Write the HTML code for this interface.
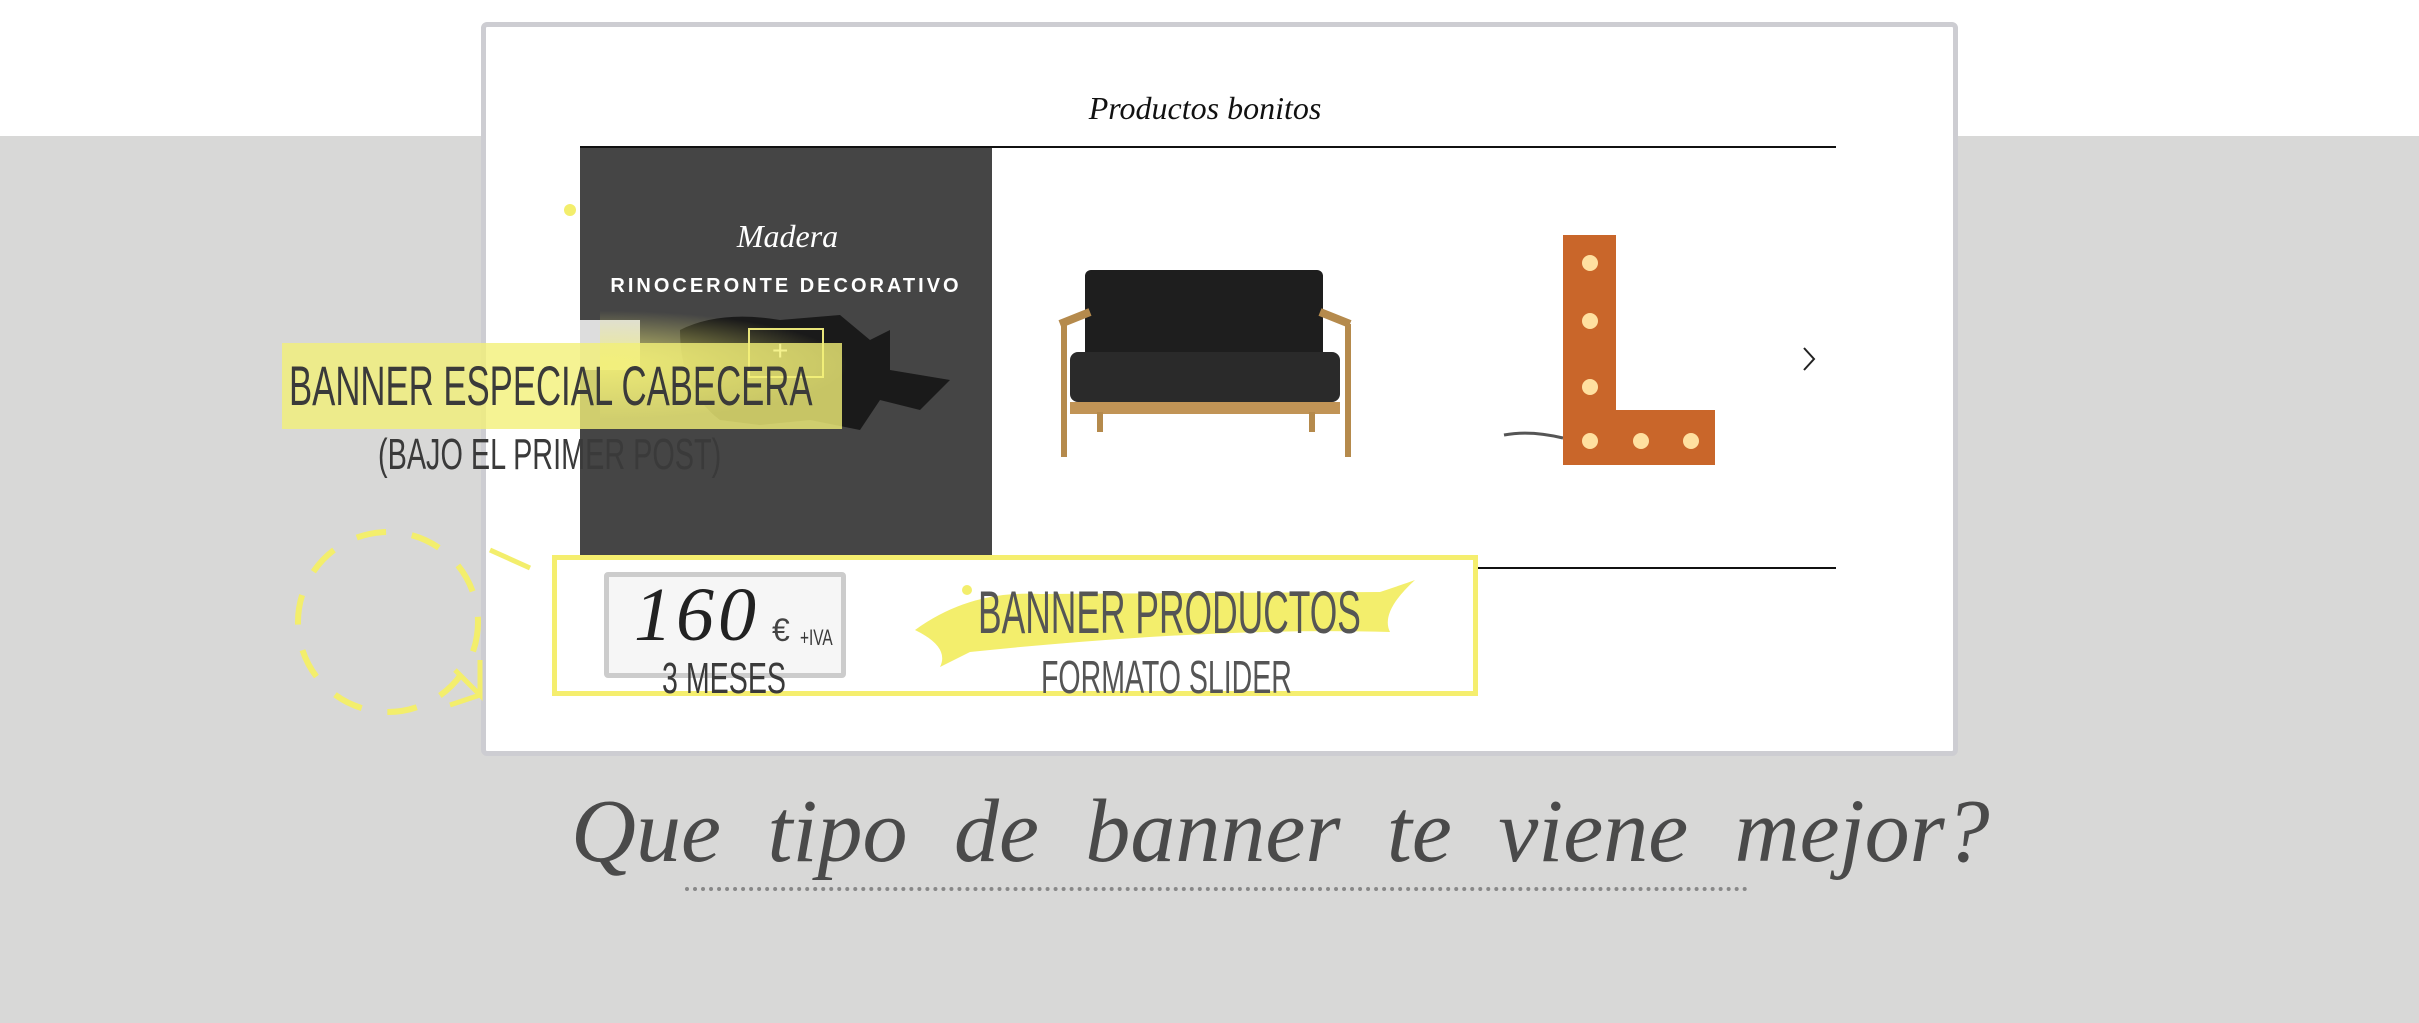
<!DOCTYPE html>
<html><head><meta charset="utf-8"><style>
*{margin:0;padding:0;box-sizing:border-box}
body{width:2419px;height:1023px;background:#d8d8d7;position:relative;overflow:hidden;font-family:"Liberation Sans",sans-serif}
.a{position:absolute}
.narrow{font-family:"Liberation Sans Narrow","Liberation Sans",sans-serif;display:inline-block;transform-origin:left top;white-space:nowrap;color:#3a3a3a}
.script{font-family:"Liberation Serif",serif;font-style:italic}
</style></head><body>
<div class="a" style="left:0;top:0;width:2419px;height:136px;background:#fff"></div>
<div class="a" style="left:481px;top:22px;width:1477px;height:734px;background:#fff;border:5px solid #cdcdd2;border-radius:6px"></div>
<div class="a script" style="left:1060px;top:90px;width:290px;text-align:center;font-size:32px;color:#111">Productos bonitos</div>
<div class="a" style="left:580px;top:146px;width:1256px;height:2px;background:#111"></div>
<div class="a" style="left:1478px;top:567px;width:358px;height:2px;background:#111"></div>
<div class="a" style="left:580px;top:148px;width:412px;height:407px;background:#454545"></div>
<div class="a script" style="left:700px;top:218px;width:175px;text-align:center;font-size:32px;color:#fff">Madera</div>
<div class="a" style="left:590px;top:275px;width:392px;text-align:center;font-size:20px;letter-spacing:3px;color:#fff;font-weight:bold">RINOCERONTE DECORATIVO</div>
<svg class="a" style="left:660px;top:300px" width="300" height="140"><path d="M20 30 Q60 10 120 20 L180 15 L210 40 L230 30 L230 70 L290 80 L260 110 L220 100 L200 130 L150 120 L100 125 L60 120 Q20 90 20 30Z" fill="#1a1a1a"/></svg>
<div class="a" style="left:580px;top:320px;width:60px;height:50px;background:#ddd"></div>
<div class="a" style="left:748px;top:328px;width:76px;height:50px;border:2px solid #e8e47a"></div>
<div class="a" style="left:772px;top:335px;color:#fff;font-size:28px">+</div>
<div class="a" style="left:282px;top:343px;width:560px;height:86px;background:rgba(243,240,120,.8)"></div>
<div class="a" style="left:600px;top:310px;width:250px;height:110px;background:radial-gradient(ellipse at left,rgba(243,240,120,.8),rgba(243,240,120,0) 70%)"></div>
<div class="a" style="left:289px;top:353px"><span class="narrow" style="font-size:56px;transform:scaleX(.62)">BANNER ESPECIAL CABECERA</span></div>
<div class="a" style="left:378px;top:430px"><span class="narrow" style="font-size:44px;transform:scaleX(.655)">(BAJO EL PRIMER POST)</span></div>
<div class="a" style="left:564px;top:204px;width:12px;height:12px;border-radius:50%;background:#f3ee6c"></div>
<svg class="a" style="left:1050px;top:262px" width="312" height="200">
<rect x="35" y="8" width="238" height="95" rx="6" fill="#1e1e1e"/>
<rect x="20" y="90" width="270" height="50" rx="8" fill="#2a2a2a"/>
<path d="M10 62 L40 50 M300 62 L270 50" stroke="#b58a4c" stroke-width="8"/>
<rect x="20" y="140" width="270" height="12" fill="#c19456"/>
<path d="M14 62 L14 195 M298 62 L298 195 M50 150 L50 170 M262 150 L262 170" stroke="#b58a4c" stroke-width="6"/>
</svg>
<svg class="a" style="left:1500px;top:230px" width="230" height="240">
<path d="M4 205 Q30 200 63 208" stroke="#555" stroke-width="3" fill="none"/>
<path d="M63 5 H116 V180 H215 V235 H63Z" fill="#c9662a"/>
<g fill="#ffe0a0"><circle cx="90" cy="33" r="8"/><circle cx="90" cy="91" r="8"/><circle cx="90" cy="157" r="8"/><circle cx="90" cy="211" r="8"/><circle cx="141" cy="211" r="8"/><circle cx="191" cy="211" r="8"/></g>
</svg>
<svg class="a" style="left:1800px;top:345px" width="20" height="28"><path d="M4 3 L14 14 L4 25" stroke="#222" stroke-width="2" fill="none"/></svg>
<div class="a" style="left:552px;top:555px;width:926px;height:141px;border:5px solid #f5ee6e;background:rgba(255,255,255,.3)"></div>
<div class="a" style="left:604px;top:572px;width:242px;height:106px;border:5px solid #ccc;background:#f6f6f6;border-radius:4px"></div>
<div class="a script" style="left:634px;top:572px;font-size:76px;color:#222;letter-spacing:4px">160</div>
<div class="a" style="left:772px;top:612px;font-size:32px;color:#444">€</div>
<div class="a" style="left:800px;top:625px"><span class="narrow" style="font-size:22px;transform:scaleX(.7)">+IVA</span></div>
<div class="a" style="left:662px;top:654px"><span class="narrow" style="font-size:44px;transform:scaleX(.65)">3 MESES</span></div>
<svg class="a" style="left:910px;top:572px" width="510" height="100"><path d="M5 58 Q60 18 130 22 L470 20 Q500 10 505 8 Q470 40 480 60 Q300 55 60 80 L30 95 Q40 75 5 58Z" fill="#f3ee6c"/></svg>
<div class="a" style="left:962px;top:585px;width:10px;height:10px;border-radius:50%;background:#f3ee6c"></div>
<div class="a" style="left:978px;top:578px"><span class="narrow" style="font-size:60px;transform:scaleX(.59);color:#555">BANNER PRODUCTOS</span></div>
<div class="a" style="left:1041px;top:650px"><span class="narrow" style="font-size:46px;transform:scaleX(.62);color:#555">FORMATO SLIDER</span></div>
<svg class="a" style="left:280px;top:520px" width="260" height="210">
<circle cx="108" cy="102" r="90" stroke="#f3ee6c" stroke-width="6" fill="none" stroke-dasharray="30 26"/>
<path d="M210 30 L250 48" stroke="#f3ee6c" stroke-width="5"/>
<path d="M175 150 L200 175 L200 140 M170 185 L200 175" stroke="#f3ee6c" stroke-width="5" fill="none"/>
</svg>
<div class="a script" style="left:571px;top:780px;font-size:90px;color:#4a4a4a;letter-spacing:0;word-spacing:24px;white-space:nowrap">Que tipo de banner te viene mejor?</div>
<div class="a" style="left:685px;top:887px;width:1063px;border-top:4px dotted #888"></div>
</body></html>
